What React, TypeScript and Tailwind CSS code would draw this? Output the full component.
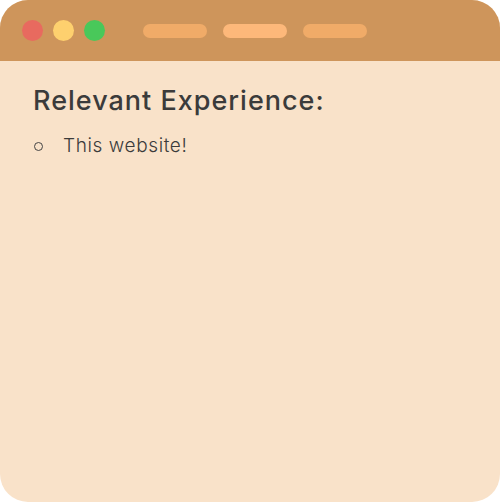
import React from "react";

export default function App() {
  return (
    <div className="w-[500px] h-[502px] rounded-[28px] overflow-hidden bg-[#F9E2C9] flex flex-col" style={{ fontFamily: 'Inter, "Open Sans", sans-serif' }}>
      <div className="h-[61px] bg-[#CE955B] flex items-center pl-[22px] shrink-0">
        <div className="flex gap-[10px]">
          <div className="w-[21px] h-[21px] rounded-full bg-[#E86A5F]" />
          <div className="w-[21px] h-[21px] rounded-full bg-[#FED06E]" />
          <div className="w-[21px] h-[21px] rounded-full bg-[#49C85A]" />
        </div>
        <div className="flex gap-[16px] ml-[38px]">
          <div className="w-[64px] h-[14px] rounded-full bg-[#F0AB68]" />
          <div className="w-[64px] h-[14px] rounded-full bg-[#FDB87A]" />
          <div className="w-[64px] h-[14px] rounded-full bg-[#F0AB68]" />
        </div>
      </div>
      <div className="pl-[33px] pt-[20px] text-[#3B3B3B]">
        <h1 className="text-[27px] leading-[40px] font-medium tracking-[1px]">Relevant Experience:</h1>
        <ul className="mt-[10px]">
          <li className="flex items-center">
            <span className="w-[9px] h-[9px] rounded-full border-[1.5px] border-[#444] ml-[1px]" />
            <span className="ml-[20px] text-[19px] font-light leading-[30px] tracking-[0.6px]">This website!</span>
          </li>
        </ul>
      </div>
    </div>
  );
}
